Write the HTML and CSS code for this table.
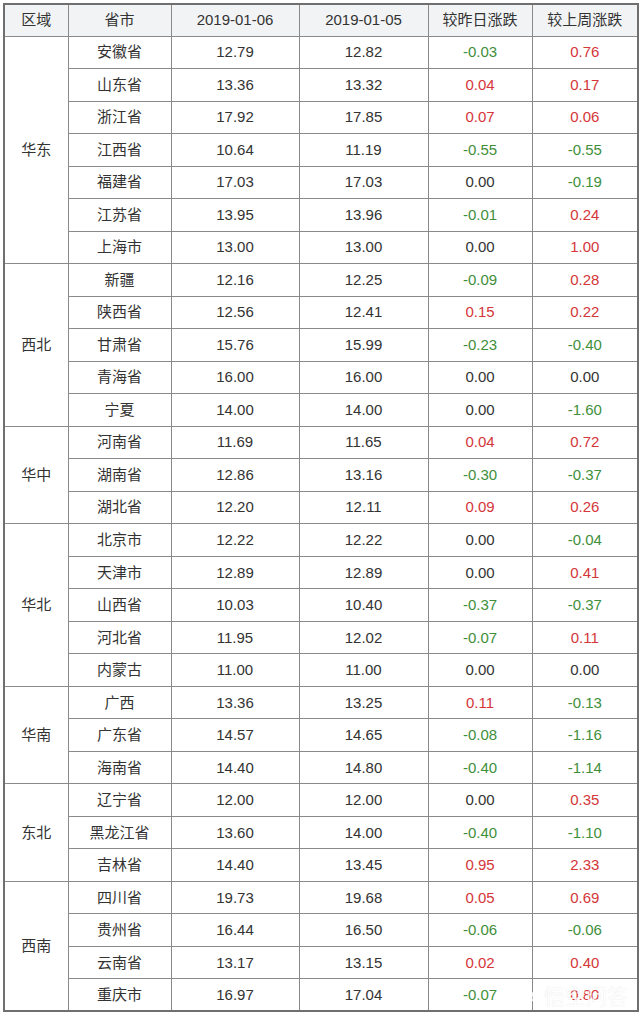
FILE: index.html
```html
<!DOCTYPE html>
<html lang="zh">
<head>
<meta charset="utf-8">
<link rel="stylesheet" href="styles.css">
</head>
<body>
<div class="wrap">
<table class="price">
<colgroup>
<col class="c1"><col class="c2"><col class="c3"><col class="c4"><col class="c5"><col class="c6">
</colgroup>
<thead>
<tr class="head"><th>区域</th><th>省市</th><th>2019-01-06</th><th>2019-01-05</th><th>较昨日涨跌</th><th>较上周涨跌</th></tr>
</thead>
<tbody>
<tr><td rowspan="7">华东</td><td>安徽省</td><td>12.79</td><td>12.82</td><td class="g">-0.03</td><td class="r">0.76</td></tr>
<tr><td>山东省</td><td>13.36</td><td>13.32</td><td class="r">0.04</td><td class="r">0.17</td></tr>
<tr><td>浙江省</td><td>17.92</td><td>17.85</td><td class="r">0.07</td><td class="r">0.06</td></tr>
<tr><td>江西省</td><td>10.64</td><td>11.19</td><td class="g">-0.55</td><td class="g">-0.55</td></tr>
<tr><td>福建省</td><td>17.03</td><td>17.03</td><td>0.00</td><td class="g">-0.19</td></tr>
<tr><td>江苏省</td><td>13.95</td><td>13.96</td><td class="g">-0.01</td><td class="r">0.24</td></tr>
<tr><td>上海市</td><td>13.00</td><td>13.00</td><td>0.00</td><td class="r">1.00</td></tr>
<tr><td rowspan="5">西北</td><td>新疆</td><td>12.16</td><td>12.25</td><td class="g">-0.09</td><td class="r">0.28</td></tr>
<tr><td>陕西省</td><td>12.56</td><td>12.41</td><td class="r">0.15</td><td class="r">0.22</td></tr>
<tr><td>甘肃省</td><td>15.76</td><td>15.99</td><td class="g">-0.23</td><td class="g">-0.40</td></tr>
<tr><td>青海省</td><td>16.00</td><td>16.00</td><td>0.00</td><td>0.00</td></tr>
<tr><td>宁夏</td><td>14.00</td><td>14.00</td><td>0.00</td><td class="g">-1.60</td></tr>
<tr><td rowspan="3">华中</td><td>河南省</td><td>11.69</td><td>11.65</td><td class="r">0.04</td><td class="r">0.72</td></tr>
<tr><td>湖南省</td><td>12.86</td><td>13.16</td><td class="g">-0.30</td><td class="g">-0.37</td></tr>
<tr><td>湖北省</td><td>12.20</td><td>12.11</td><td class="r">0.09</td><td class="r">0.26</td></tr>
<tr><td rowspan="5">华北</td><td>北京市</td><td>12.22</td><td>12.22</td><td>0.00</td><td class="g">-0.04</td></tr>
<tr><td>天津市</td><td>12.89</td><td>12.89</td><td>0.00</td><td class="r">0.41</td></tr>
<tr><td>山西省</td><td>10.03</td><td>10.40</td><td class="g">-0.37</td><td class="g">-0.37</td></tr>
<tr><td>河北省</td><td>11.95</td><td>12.02</td><td class="g">-0.07</td><td class="r">0.11</td></tr>
<tr><td>内蒙古</td><td>11.00</td><td>11.00</td><td>0.00</td><td>0.00</td></tr>
<tr><td rowspan="3">华南</td><td>广西</td><td>13.36</td><td>13.25</td><td class="r">0.11</td><td class="g">-0.13</td></tr>
<tr><td>广东省</td><td>14.57</td><td>14.65</td><td class="g">-0.08</td><td class="g">-1.16</td></tr>
<tr><td>海南省</td><td>14.40</td><td>14.80</td><td class="g">-0.40</td><td class="g">-1.14</td></tr>
<tr><td rowspan="3">东北</td><td>辽宁省</td><td>12.00</td><td>12.00</td><td>0.00</td><td class="r">0.35</td></tr>
<tr><td>黑龙江省</td><td>13.60</td><td>14.00</td><td class="g">-0.40</td><td class="g">-1.10</td></tr>
<tr><td>吉林省</td><td>14.40</td><td>13.45</td><td class="r">0.95</td><td class="r">2.33</td></tr>
<tr><td rowspan="4">西南</td><td>四川省</td><td>19.73</td><td>19.68</td><td class="r">0.05</td><td class="r">0.69</td></tr>
<tr><td>贵州省</td><td>16.44</td><td>16.50</td><td class="g">-0.06</td><td class="g">-0.06</td></tr>
<tr><td>云南省</td><td>13.17</td><td>13.15</td><td class="r">0.02</td><td class="r">0.40</td></tr>
<tr><td>重庆市</td><td>16.97</td><td>17.04</td><td class="g">-0.07</td><td class="r">0.80</td></tr>
</tbody>
</table>
<div class="mark">
<svg class="mark-logo" width="26" height="20" viewBox="0 0 26 20"><path d="M3 14c0-5 4-9 10-9s10 4 10 9" fill="none" stroke="#fff" stroke-width="2.4"/><path d="M2 15h22" stroke="#fff" stroke-width="2.4"/><circle cx="10" cy="10" r="1.6" fill="#fff"/><circle cx="16" cy="10" r="1.6" fill="#fff"/></svg>
<span class="mark-text">悟空问答</span>
</div>
</div>
</body>
</html>
```
FILE: styles.css
```css
html, body {
  margin: 0;
  padding: 0;
  background: #ffffff;
}
.wrap {
  position: relative;
  width: 640px;
  height: 1016px;
  padding: 3px 0 0 3px;
  box-sizing: border-box;
}
.price {
  border-collapse: collapse;
  table-layout: fixed;
  width: 634px;
  border: 2px solid #6f6f6f;
  font-family: "Liberation Sans", "Noto Sans CJK SC", sans-serif;
  font-size: 15px;
  color: #333333;
}
.c1 { width: 64px; }
.c2 { width: 103px; }
.c3 { width: 128px; }
.c4 { width: 129px; }
.c5 { width: 104px; }
.c6 { width: 106px; }
.price th, .price td {
  border: 1px solid #8a8a8a;
  padding: 0;
  text-align: center;
  vertical-align: middle;
  font-weight: normal;
  line-height: 18px;
}
.head {
  height: 32px;
  background: #f2f3f5;
}
.price tbody tr {
  height: 32.53px;
}
.g { color: #3f8f3a; }
.r { color: #d4363a; }
.mark {
  position: absolute;
  left: 511px;
  top: 983px;
  display: flex;
  align-items: center;
  gap: 7px;
  opacity: 0.85;
}
.mark-text {
  font-family: "Noto Sans CJK SC", sans-serif;
  font-size: 21px;
  line-height: 24px;
  color: #ffffff;
  text-shadow: 0 0 1px rgba(0,0,0,0.15);
}
```
